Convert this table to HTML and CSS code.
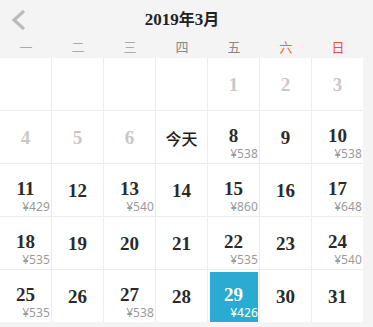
FILE: index.html
```html
<!DOCTYPE html>
<html lang="zh">
<head>
<meta charset="utf-8">
<link rel="stylesheet" href="styles.css">
</head>
<body>
<div class="cal">
  <div class="head">
    <svg class="back" width="16" height="24" viewBox="0 0 16 24"><path d="M13 2 L3 11 L13 20" fill="none" stroke="#bbb" stroke-width="3.2"/></svg>
    <div class="title"><span class="num">2019</span>年<span class="num">3</span>月</div>
  </div>
  <div class="week">
    <span>一</span><span>二</span><span>三</span><span class="dk">四</span><span class="dk">五</span><span class="sat">六</span><span class="sun">日</span>
  </div>
  <div class="grid">
    <div class="cell"></div>
    <div class="cell"></div>
    <div class="cell"></div>
    <div class="cell"></div>
    <div class="cell off"><span class="d">1</span></div>
    <div class="cell off"><span class="d">2</span></div>
    <div class="cell off"><span class="d">3</span></div>

    <div class="cell off"><span class="d">4</span></div>
    <div class="cell off"><span class="d">5</span></div>
    <div class="cell off"><span class="d">6</span></div>
    <div class="cell"><span class="today">今天</span></div>
    <div class="cell priced"><span class="d">8</span><span class="p">¥538</span></div>
    <div class="cell"><span class="d">9</span></div>
    <div class="cell priced"><span class="d">10</span><span class="p">¥538</span></div>

    <div class="cell priced"><span class="d">11</span><span class="p">¥429</span></div>
    <div class="cell"><span class="d">12</span></div>
    <div class="cell priced"><span class="d">13</span><span class="p">¥540</span></div>
    <div class="cell"><span class="d">14</span></div>
    <div class="cell priced"><span class="d">15</span><span class="p">¥860</span></div>
    <div class="cell"><span class="d">16</span></div>
    <div class="cell priced"><span class="d">17</span><span class="p">¥648</span></div>

    <div class="cell priced"><span class="d">18</span><span class="p">¥535</span></div>
    <div class="cell"><span class="d">19</span></div>
    <div class="cell"><span class="d">20</span></div>
    <div class="cell"><span class="d">21</span></div>
    <div class="cell priced"><span class="d">22</span><span class="p">¥535</span></div>
    <div class="cell"><span class="d">23</span></div>
    <div class="cell priced"><span class="d">24</span><span class="p">¥540</span></div>

    <div class="cell priced"><span class="d">25</span><span class="p">¥535</span></div>
    <div class="cell"><span class="d">26</span></div>
    <div class="cell priced"><span class="d">27</span><span class="p">¥538</span></div>
    <div class="cell"><span class="d">28</span></div>
    <div class="cell priced sel"><span class="d">29</span><span class="p">¥426</span></div>
    <div class="cell"><span class="d">30</span></div>
    <div class="cell"><span class="d">31</span></div>
  </div>
</div>
</body>
</html>
```
FILE: styles.css
```css
html, body {
  margin: 0;
  padding: 0;
  background: #f4f4f4;
}
body {
  font-family: "Noto Sans CJK SC", "Noto Sans", sans-serif;
}
.cal {
  width: 364px;
}
.head {
  height: 35px;
  display: flex;
  align-items: center;
  justify-content: center;
  position: relative;
}
.back {
  position: absolute;
  left: 11px;
  top: 9px;
}
.title {
  font-size: 16px;
  font-weight: 700;
  color: #222;
  margin-top: 1px;
}
.num {
  font-family: "Liberation Serif", serif;
  font-size: 17px;
}
.week {
  display: grid;
  grid-template-columns: repeat(7, 1fr);
  height: 22px;
  align-items: center;
  font-size: 13px;
  color: #aaa;
  text-align: center;
}
.week .dk { color: #888; }
.week .sat { color: #ec6a34; }
.week .sun { color: #e8532e; }
.grid {
  margin-top: 1px;
  display: grid;
  grid-template-columns: repeat(7, 51px);
  grid-auto-rows: 52px;
  gap: 1px;
  background: #ececec;
  width: 363px;
}
.cell {
  background: #fff;
  display: flex;
  flex-direction: column;
  align-items: center;
  padding-top: 17px;
  box-sizing: border-box;
}
.cell.priced {
  padding-top: 15px;
}
.d {
  font-family: "Liberation Serif", serif;
  font-weight: 700;
  font-size: 19px;
  line-height: 20px;
  color: #2a2a2a;
}
.off .d {
  color: #c8c8c8;
}
.today {
  font-size: 16px;
  line-height: 20px;
  color: #1e1e1e;
  font-weight: 500;
}
.p {
  align-self: flex-end;
  margin-right: 1px;
  font-family: "Noto Sans", sans-serif;
  font-size: 12px;
  line-height: 15px;
  color: #9a9a9a;
  letter-spacing: 0.1px;
}
.sel {
  background: #2aabd2;
  box-shadow: inset 2px 2px 0 #fff, inset -1px 0 0 #fff;
}
.sel .d, .sel .p {
  color: #fff;
}
```
